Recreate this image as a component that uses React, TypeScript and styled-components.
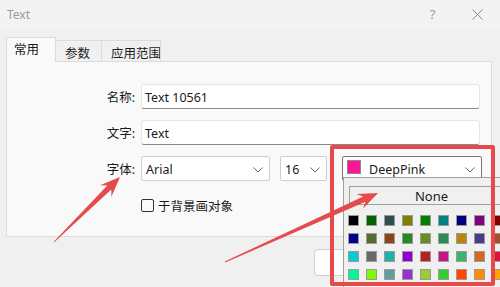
import styled, { createGlobalStyle } from "styled-components"

const GlobalStyle = createGlobalStyle`
  html, body {
    margin: 0;
    padding: 0;
    background: #f0f0f0;
    overflow: hidden;
  }
  body {
    font-family: "Noto Sans", "Noto Sans CJK SC", sans-serif;
    font-size: 12.5px;
    color: #1a1a1a;
  }
`

const Window = styled.div`
  position: relative;
  width: 500px;
  height: 287px;
  overflow: hidden;
  background: #f0f0f0;
  display: flex;
  flex-direction: column;
`

const TitleBar = styled.div`
  height: 28px;
  flex: none;
  display: flex;
  align-items: center;
  background: #f3f3f3;
  padding-left: 7px;
  font-size: 12px;
  color: #9a9a9a;
`

const Title = styled.div`
  flex: 1;
`

const TitleButton = styled.div`
  width: 45px;
  height: 28px;
  display: flex;
  align-items: center;
  justify-content: center;
  color: #9a9a9a;
  font-size: 13px;
`

const Body = styled.div`
  padding: 10px 8px 0 6px;
  display: flex;
  flex-direction: column;
`

const TabStrip = styled.div`
  display: flex;
  align-items: flex-end;
  height: 24px;
  position: relative;
  z-index: 1;
  margin-bottom: -1px;
`

const Tab = styled.div<{ $active?: boolean; $width: number }>`
  width: ${(p) => p.$width}px;
  height: ${(p) => (p.$active ? 25 : 22)}px;
  box-sizing: border-box;
  white-space: nowrap;
  overflow: hidden;
  padding: ${(p) => (p.$active ? "1px 0 0 7px" : "2px 0 0 9px")};
  border: 1px solid #dcdcdc;
  border-bottom: ${(p) => (p.$active ? "none" : "1px solid #dcdcdc")};
  border-left: ${(p) => (p.$active ? "1px solid #dcdcdc" : "none")};
  background: ${(p) => (p.$active ? "#f9f9f9" : "#f0f0f0")};
  color: #1a1a1a;
`

const Panel = styled.div`
  height: 176px;
  box-sizing: border-box;
  border: 1px solid #dcdcdc;
  background: #f9f9f9;
  padding: 22px 11px 0 0;
  display: flex;
  flex-direction: column;
  gap: 11px;
`

const Row = styled.div`
  display: flex;
  align-items: center;
  height: 25px;
`

const Label = styled.div`
  width: 128px;
  text-align: right;
  margin-right: 6px;
  flex: none;
`

const TextInput = styled.div`
  flex: 1;
  height: 25px;
  box-sizing: border-box;
  background: #fff;
  border: 1px solid #e6e6e6;
  border-bottom: 1px solid #8a8a8a;
  border-radius: 3px;
  padding: 1px 0 0 3px;
  display: flex;
  align-items: center;
`

const Select = styled.div<{ $width: number; $dark?: boolean; $gap?: number }>`
  width: ${(p) => p.$width}px;
  margin-left: ${(p) => p.$gap ?? 0}px;
  height: 25px;
  box-sizing: border-box;
  background: #fff;
  border: 1px solid ${(p) => (p.$dark ? "#7a7a7a" : "#cfcfcf")};
  border-radius: 2px;
  display: flex;
  align-items: center;
  padding: 2px 6px 0 4px;
  flex: none;
`

const SelectText = styled.div`
  flex: 1;
`

const Swatch = styled.div<{ $color: string }>`
  width: 12px;
  height: 12px;
  background: ${(p) => p.$color};
  border: 1px solid #888;
  margin: -6px 8px 0 0;
`

const CheckRow = styled.div`
  display: flex;
  align-items: center;
  padding-left: 134px;
  height: 18px;
  margin-top: 4px;
`

const CheckBox = styled.div`
  width: 11px;
  height: 11px;
  border: 1px solid #333;
  border-radius: 2px;
  margin-right: 4px;
`

const Footer = styled.div`
  display: flex;
  justify-content: flex-end;
  gap: 8px;
  padding: 12px 2px 0 0;
`

const Button = styled.div`
  width: 88px;
  height: 27px;
  box-sizing: border-box;
  background: #fdfdfd;
  border: 1px solid #d0d0d0;
  border-radius: 4px;
  display: flex;
  align-items: center;
  justify-content: center;
`

const Popup = styled.div`
  position: absolute;
  left: 343px;
  top: 177px;
  width: 170px;
  height: 120px;
  background: #f0f0f0;
  border-left: 1px solid #a0a0a0;
  border-top: 1px solid #a0a0a0;
  padding: 8px 0 0 5px;
  box-sizing: border-box;
`

const NoneButton = styled.div`
  height: 19px;
  box-sizing: border-box;
  border: 1px solid #a0a0a0;
  border-right: none;
  background: #f0f0f0;
  display: flex;
  align-items: center;
  justify-content: center;
  font-size: 13px;
  margin-bottom: 10px;
`

const ColorGrid = styled.div`
  display: grid;
  grid-template-columns: repeat(9, 11px);
  column-gap: 7px;
  row-gap: 7px;
  margin-left: -1px;
`

const Cell = styled.div<{ $color: string }>`
  width: 11px;
  height: 11px;
  box-sizing: border-box;
  background: ${(p) => p.$color};
  border: 1px solid #9a9a9a;
`

const Highlight = styled.div`
  position: absolute;
  left: 330px;
  top: 145px;
  width: 165px;
  height: 141px;
  box-sizing: border-box;
  border: 4px solid #e54b4b;
  border-radius: 2px;
  pointer-events: none;
`

const Overlay = styled.svg`
  position: absolute;
  left: 0;
  top: 0;
  pointer-events: none;
`

const Chevron = () => (
  <svg width="10" height="6" viewBox="0 0 10 6">
    <path d="M0.5 0.5 L5 5 L9.5 0.5" fill="none" stroke="#666" strokeWidth="1" />
  </svg>
)

const colors = [
  "#000000", "#006400", "#2f4f4f", "#808000", "#008000", "#008080", "#000080", "#800080", "#800000",
  "#00008b", "#556b2f", "#8b4513", "#228b22", "#6b8e23", "#2e8b57", "#b8860b", "#483d8b", "#a0522d",
  "#00ced1", "#696969", "#20b2aa", "#9400d3", "#b22222", "#c71585", "#3cb371", "#d2691e", "#dc143c",
  "#00fa9a", "#7cfc00", "#5f9ea0", "#9932cc", "#9acd32", "#32cd32", "#ff4500", "#ff8c00", "#ffa500",
]

// tapered annotation arrow from tail to tip
const arrowPoints = (x1: number, y1: number, x2: number, y2: number) => {
  const dx = x2 - x1
  const dy = y2 - y1
  const len = Math.hypot(dx, dy)
  const ux = dx / len
  const uy = dy / len
  const nx = -uy
  const ny = ux
  const head = 20
  const neck = 15
  const wing = 8
  const shaft = 2.8
  const tail = 0.4
  const bx = x2 - ux * head
  const by = y2 - uy * head
  const kx = x2 - ux * neck
  const ky = y2 - uy * neck
  const pts = [
    [x1 + nx * tail, y1 + ny * tail],
    [kx + nx * shaft, ky + ny * shaft],
    [bx + nx * wing, by + ny * wing],
    [x2, y2],
    [bx - nx * wing, by - ny * wing],
    [kx - nx * shaft, ky - ny * shaft],
    [x1 - nx * tail, y1 - ny * tail],
  ]
  return pts.map((p) => p.map((v) => v.toFixed(1)).join(",")).join(" ")
}

export default function App() {
  return (
    <Window>
      <GlobalStyle />
      <TitleBar>
        <Title>Text</Title>
        <TitleButton>?</TitleButton>
        <TitleButton>
          <svg width="11" height="11" viewBox="0 0 11 11">
            <path d="M0.5 0.5 L10.5 10.5 M10.5 0.5 L0.5 10.5" stroke="#8a8a8a" strokeWidth="1" />
          </svg>
        </TitleButton>
      </TitleBar>
      <Body>
        <TabStrip>
          <Tab $active $width={50}>常用</Tab>
          <Tab $width={46}>参数</Tab>
          <Tab $width={59}>应用范围</Tab>
        </TabStrip>
        <Panel>
          <Row>
            <Label>名称:</Label>
            <TextInput>Text 10561</TextInput>
          </Row>
          <Row>
            <Label>文字:</Label>
            <TextInput>Text</TextInput>
          </Row>
          <Row>
            <Label>字体:</Label>
            <Select $width={129}>
              <SelectText>Arial</SelectText>
              <Chevron />
            </Select>
            <Select $width={47} $gap={10}>
              <SelectText>16</SelectText>
              <Chevron />
            </Select>
            <Select $width={140} $gap={15} $dark>
              <Swatch $color="#ff1493" />
              <SelectText>DeepPink</SelectText>
              <Chevron />
            </Select>
          </Row>
          <CheckRow>
            <CheckBox />
            于背景画对象
          </CheckRow>
        </Panel>
      </Body>
      <Footer>
        <Button>确定</Button>
        <Button>取消</Button>
      </Footer>
      <Popup>
        <NoneButton>None</NoneButton>
        <ColorGrid>
          {colors.map((c, i) => (
            <Cell key={i} $color={c} />
          ))}
        </ColorGrid>
      </Popup>
      <Highlight />
      <Overlay width="500" height="287" viewBox="0 0 500 287">
        <polygon points={arrowPoints(54, 242, 120, 177)} fill="#e54b4b" />
        <polygon points={arrowPoints(225, 262, 378, 193)} fill="#e54b4b" />
      </Overlay>
    </Window>
  )
}
